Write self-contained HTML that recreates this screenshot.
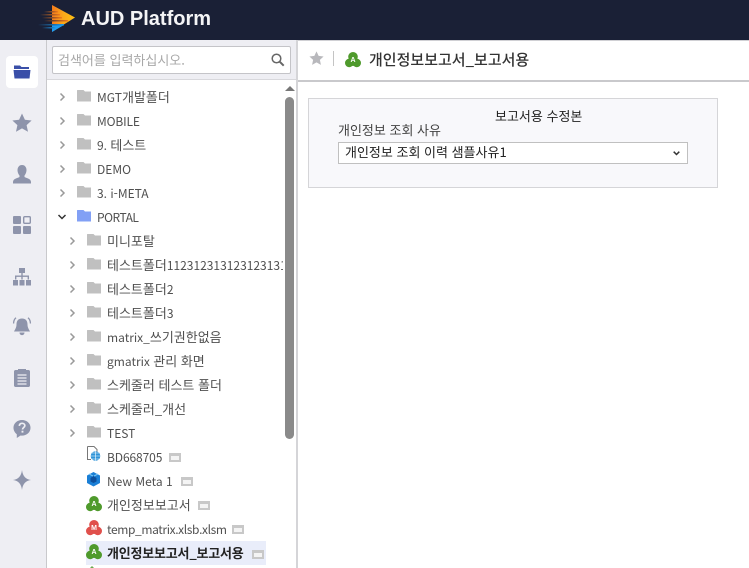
<!DOCTYPE html>
<html lang="ko">
<head>
<meta charset="utf-8">
<title>AUD Platform</title>
<style>
html,body{margin:0;padding:0;width:749px;height:568px;overflow:hidden;background:#fff}
body{position:relative;font-family:"Noto Sans CJK KR","Liberation Sans",sans-serif;font-size:13px;color:#444}
.a{position:absolute}
.t{position:absolute;white-space:nowrap;line-height:16px;color:#505050;font-size:13px}
.t i{font-style:normal;font-size:12px}
svg{position:absolute;display:block;overflow:visible}
</style>
</head>
<body>
<div class="a" style="left:0;top:0;width:749px;height:40px;background:#1a2036"></div>
<svg style="left:38px;top:4px" width="38" height="29" viewBox="0 0 38 29">
<defs>
<linearGradient id="g1" x1="0" y1="0" x2="1" y2="0"><stop offset="0" stop-color="#f47a1c"/><stop offset=".5" stop-color="#fba81a"/><stop offset="1" stop-color="#fdc013"/></linearGradient>
<linearGradient id="g2" x1="0" y1="0" x2="1" y2="0"><stop offset="0" stop-color="#1a2036"/><stop offset="1" stop-color="#f47a1c"/></linearGradient>
<linearGradient id="g3" x1="0" y1="0" x2="1" y2="0"><stop offset="0" stop-color="#1a2036"/><stop offset="1" stop-color="#1f9cf0"/></linearGradient>
</defs>
<path d="M14 1L37 13.500L14 28Z" fill="url(#g1)"/>
<path d="M14 21H26L14 28Z" fill="#1f9cf0"/>
<rect x="6" y="7" width="14" height="1.500" fill="url(#g2)"/>
<rect x="2" y="10" width="20" height="1.500" fill="url(#g2)"/>
<rect x="4" y="13" width="20" height="1.500" fill="url(#g2)"/>
<rect x="6" y="16" width="24" height="1.500" fill="url(#g2)"/>
<rect x="0" y="20" width="26" height="1.500" fill="url(#g3)"/>
<rect x="4" y="23" width="14" height="1.500" fill="url(#g3)"/>
</svg>
<div class="t" style="left:81px;top:6px;font-family:'Liberation Sans',sans-serif;font-size:20px;line-height:26px;font-weight:700;color:#f4f4f6">AUD Platform</div>

<div class="a" style="left:0;top:40px;width:46px;height:528px;background:#eeeef3"></div>
<div class="a" style="left:46px;top:40px;width:1px;height:528px;background:#c9c9cc"></div>
<div class="a" style="left:47px;top:40px;width:250px;height:40px;background:#eeeef3"></div>
<div class="a" style="left:47px;top:79px;width:250px;height:1px;background:#d8d8dc"></div>
<div class="a" style="left:52px;top:46px;width:237px;height:26px;background:#fff;border:1px solid #c4c4c8;border-radius:2px"></div>
<div class="t" style="left:58px;top:51px;font-size:13px;color:#a8a8a8;line-height:17px">검색어를 입력하십시오.</div>
<svg style="left:271px;top:53px" width="14" height="14" viewBox="0 0 14 14"><circle cx="5.500" cy="5.500" r="4.300" fill="none" stroke="#666" stroke-width="1.500"/><path d="M8.700 8.700L12.700 12.700" stroke="#666" stroke-width="2"/></svg>

<div class="a" style="left:6px;top:56px;width:32px;height:32px;background:#fff;border-radius:4px"></div>
<svg style="left:13px;top:64px" width="18" height="16" viewBox="0 0 18 16"><path d="M1 1.500H7L8.500 3H16V5H1Z" fill="#3a4fa8"/><path d="M0.500 6H17.500L16.500 14.500H1.500Z" fill="#3a4fa8"/></svg>
<svg style="left:12px;top:113px" width="20" height="19" viewBox="0 0 20 19"><path d="M10 0.500L12.900 6.700L19.600 7.500L14.600 12.100L16 18.800L10 15.400L4 18.800L5.400 12.100L0.400 7.500L7.100 6.700Z" fill="#8e94ab"/></svg>
<svg style="left:13px;top:165px" width="18" height="19" viewBox="0 0 18 19"><path d="M9 0C12 0 13.500 2.500 13.500 5C13.500 7.500 12.300 9.500 11.500 10.500V12C13 13 18 13.500 18 17V18.500H0V17C0 13.500 5 13 6.500 12V10.500C5.700 9.500 4.500 7.500 4.500 5C4.500 2.500 6 0 9 0Z" fill="#8e94ab"/></svg>
<svg style="left:13px;top:216px" width="18" height="18" viewBox="0 0 18 18"><rect x="0" y="0" width="8" height="8" rx="1" fill="#8e94ab"/><rect x="10.700" y="0.700" width="6.600" height="6.600" rx="1" fill="none" stroke="#8e94ab" stroke-width="1.400"/><rect x="0" y="10" width="8" height="8" rx="1" fill="#8e94ab"/><rect x="10" y="10" width="8" height="8" rx="1" fill="#8e94ab"/></svg>
<svg style="left:13px;top:268px" width="18" height="18" viewBox="0 0 18 18"><g fill="#8e94ab"><rect x="6" y="0" width="6" height="5"/><rect x="8.300" y="5" width="1.400" height="3"/><rect x="2" y="7.500" width="14" height="1.400"/><rect x="2" y="7.500" width="1.400" height="4"/><rect x="14.600" y="7.500" width="1.400" height="4"/><rect x="8.300" y="7.500" width="1.400" height="4"/><rect x="0" y="12" width="5" height="5.500"/><rect x="6.500" y="12" width="5" height="5.500"/><rect x="13" y="12" width="5" height="5.500"/></g></svg>
<svg style="left:13px;top:317px" width="18" height="19" viewBox="0 0 18 19"><path d="M9 1.500C13 1.500 14.500 4 14.500 7.500C14.500 10.500 16 12.500 17 14.500H1C2 12.500 3.500 10.500 3.500 7.500C3.500 4 5 1.500 9 1.500Z" fill="#8e94ab"/><path d="M6.500 15.500H11.500C11.500 19 6.500 19 6.500 15.500Z" fill="#8e94ab"/><path d="M3 0.800C1.200 2.300 .6 4.300 .6 6.500M15 0.800C16.800 2.300 17.400 4.300 17.400 6.500" fill="none" stroke="#8e94ab" stroke-width="1.300"/></svg>
<svg style="left:14px;top:369px" width="16" height="18" viewBox="0 0 16 18"><path d="M1.500 1H4V0H12V1H14.500C15.300 1 16 1.700 16 2.500V16.500C16 17.300 15.300 18 14.500 18H1.500C.7 18 0 17.300 0 16.500V2.500C0 1.700 .7 1 1.500 1Z" fill="#8e94ab"/><path d="M3.500 6H12.500M3.500 9H12.500M3.500 12H12.500M3.500 15H12.500" stroke="#eeeef3" stroke-width="1.200"/></svg>
<svg style="left:13px;top:419px" width="18" height="20" viewBox="0 0 19 20"><path d="M9.500 0.500C14.500 0.500 18.500 4 18.500 8.700C18.500 13.400 14.500 17 9.500 17C9 17 8.500 17 8 16.900L4 19.500V15.500C2 14 .5 11.500 .5 8.700C.5 4 4.500 .5 9.500 .5Z" fill="#8e94ab"/><path d="M6.700 6.800C6.800 5 8 4 9.600 4C11.300 4 12.500 5 12.500 6.500C12.500 8.300 10 8.500 10 10.500" fill="none" stroke="#eeeef3" stroke-width="1.800"/><rect x="9" y="11.800" width="2" height="2" fill="#eeeef3"/></svg>
<svg style="left:13px;top:470px" width="18" height="20" viewBox="0 0 20 20" preserveAspectRatio="none"><path d="M10 0C10.800 6 14 9.200 20 10C14 10.800 10.800 14 10 20C9.200 14 6 10.800 0 10C6 9.200 9.200 6 10 0Z" fill="#8e94ab"/></svg>

<!-- tree rows -->
<svg style="left:0;top:0" width="298" height="568" viewBox="0 0 298 568">
<defs>
<path id="f" d="M0 .6C0 .3 .3 0 .6 0H6.500L8 1.500H14V11.500H0Z"/>
<path id="ch" d="M0 0L3.500 3.500L0 7" fill="none" stroke="#9a9a9a" stroke-width="1.500"/>
</defs>
<g fill="#c0c0c0">
<use href="#f" x="77" y="90"/><use href="#f" x="77" y="114"/><use href="#f" x="77" y="138"/><use href="#f" x="77" y="162"/><use href="#f" x="77" y="186"/>
<use href="#f" x="77" y="210" fill="#82a0f5"/>
<use href="#f" x="87" y="234"/><use href="#f" x="87" y="258"/><use href="#f" x="87" y="282"/><use href="#f" x="87" y="306"/><use href="#f" x="87" y="330"/><use href="#f" x="87" y="354"/><use href="#f" x="87" y="378"/><use href="#f" x="87" y="402"/><use href="#f" x="87" y="426"/>
</g>
<use href="#ch" x="60.500" y="93.500"/><use href="#ch" x="60.500" y="117.500"/><use href="#ch" x="60.500" y="141.500"/><use href="#ch" x="60.500" y="165.500"/><use href="#ch" x="60.500" y="189.500"/>
<path d="M58.500 215L62 218.500L65.500 215" fill="none" stroke="#333" stroke-width="1.500"/>
<use href="#ch" x="70.500" y="237.500"/><use href="#ch" x="70.500" y="261.500"/><use href="#ch" x="70.500" y="285.500"/><use href="#ch" x="70.500" y="309.500"/><use href="#ch" x="70.500" y="333.500"/><use href="#ch" x="70.500" y="357.500"/><use href="#ch" x="70.500" y="381.500"/><use href="#ch" x="70.500" y="405.500"/><use href="#ch" x="70.500" y="429.500"/>
</svg>

<div class="t" style="left:97px;top:89px"><i>MGT</i>개발폴더</div>
<div class="t" style="left:97px;top:113px"><i style="letter-spacing:-.15px">MOBILE</i></div>
<div class="t" style="left:97px;top:137px"><i>9. </i>테스트</div>
<div class="t" style="left:97px;top:161px"><i>DEMO</i></div>
<div class="t" style="left:97px;top:185px"><i>3. i-META</i></div>
<div class="t" style="left:97px;top:209px"><i style="letter-spacing:-.5px">PORTAL</i></div>
<div class="t" style="left:107px;top:233px">미니포탈</div>
<div class="t" style="left:107px;top:257px;width:176px;overflow:hidden">테스트폴더<i>11231231312312313123</i></div>
<div class="t" style="left:107px;top:281px">테스트폴더<i>2</i></div>
<div class="t" style="left:107px;top:305px">테스트폴더<i>3</i></div>
<div class="t" style="left:107px;top:329px"><i>matrix_</i>쓰기권한없음</div>
<div class="t" style="left:107px;top:353px"><i>gmatrix </i>관리 화면</div>
<div class="t" style="left:107px;top:377px">스케줄러 테스트 폴더</div>
<div class="t" style="left:107px;top:401px">스케줄러_개선</div>
<div class="t" style="left:107px;top:425px"><i>TEST</i></div>
<div class="t" style="left:107px;top:449px"><i style="letter-spacing:-.1px">BD668705</i></div>
<div class="t" style="left:107px;top:473px"><i>New Meta 1</i></div>
<div class="t" style="left:107px;top:497px">개인정보보고서</div>
<div class="t" style="left:107px;top:521px"><i style="letter-spacing:-.38px">temp_matrix.xlsb.xlsm</i></div>
<div class="a" style="left:86px;top:541px;width:180px;height:24px;background:#e9edfa"></div>
<div class="t" style="left:107px;top:545px;font-weight:700;color:#222;letter-spacing:-.2px">개인정보보고서_보고서용</div>

<svg style="left:0;top:0" width="298" height="568" viewBox="0 0 298 568">
<defs>
<g id="clo"><circle cx="8" cy="4.800" r="4.800"/><circle cx="4.200" cy="11" r="4.200"/><circle cx="11.800" cy="11" r="4.200"/><circle cx="8" cy="9" r="5"/></g>
<g id="win"><rect x="0" y="0" width="12" height="9" fill="#c8c8c8"/><rect x="2" y="3" width="8" height="4" fill="#f4f4f4"/></g>
</defs>
<path d="M87.500 446.500H94L97 449.500V452M87.500 446.500V459.500H91" fill="none" stroke="#777" stroke-width="1"/>
<circle cx="95.500" cy="456" r="4.800" fill="#2f94d8"/><path d="M90.700 456H100.300M95.500 451.200V460.800M92 453H99M92 459H99" stroke="#fff" stroke-width=".6" fill="none"/>
<path d="M93.500 472L100 475.500V483L93.500 486.500L87 483V475.500Z" fill="#1a7fd6"/><path d="M93.500 476L96.500 478V481.500L93.500 483L90.500 481.500V478Z" fill="#0d4f9c"/><path d="M89 474L93 476M98 474L94 476" stroke="#7cc6f2" stroke-width="1"/>
<use href="#clo" x="86" y="496" fill="#4f9a2c"/><use href="#clo" x="86" y="520" fill="#e0504c"/><use href="#clo" x="86" y="544" fill="#4f9a2c"/>
<use href="#win" x="169" y="453"/><use href="#win" x="181" y="477"/><use href="#win" x="198" y="501"/><use href="#win" x="232" y="525"/><use href="#win" x="252" y="550" />
<g transform="translate(345 52)"><use href="#clo" fill="#4f9a2c"/></g>
<path d="M92 566L94 568H90Z" fill="#6aa84f"/>
</svg>
<div class="t" style="left:90px;top:499px;width:8px;text-align:center;font-family:'Liberation Sans',sans-serif;font-size:7px;font-weight:700;line-height:12px;color:#fff">A</div>
<div class="t" style="left:90px;top:523px;width:8px;text-align:center;font-family:'Liberation Sans',sans-serif;font-size:7px;font-weight:700;line-height:12px;color:#fff">M</div>
<div class="t" style="left:90px;top:547px;width:8px;text-align:center;font-family:'Liberation Sans',sans-serif;font-size:7px;font-weight:700;line-height:12px;color:#fff">A</div>

<!-- scrollbar -->
<svg style="left:285px;top:86px" width="10" height="5" viewBox="0 0 10 5"><path d="M5 0L10 5H0Z" fill="#777"/></svg>
<div class="a" style="left:285px;top:97px;width:9px;height:342px;background:#8a8a8a;border-radius:4.500px"></div>
<div class="a" style="left:296px;top:40px;width:2px;height:528px;background:#d5d5d8"></div>

<!-- main -->
<div class="a" style="left:298px;top:40px;width:451px;height:1px;background:#d0d0d4"></div>
<div class="a" style="left:298px;top:80px;width:451px;height:2px;background:#c9c9cc"></div>
<svg style="left:309px;top:51px" width="15" height="14" viewBox="0 0 20 19"><path d="M10 0.500L12.900 6.700L19.600 7.500L14.600 12.100L16 18.800L10 15.400L4 18.800L5.400 12.100L0.400 7.500L7.100 6.700Z" fill="#b8b8bc"/></svg>
<div class="a" style="left:333px;top:51px;width:1px;height:15px;background:#c4c4c4"></div>
<div class="t" style="left:349px;top:55px;width:8px;text-align:center;font-family:'Liberation Sans',sans-serif;font-size:7px;font-weight:700;line-height:12px;color:#fff">A</div>
<div class="t" style="left:369px;top:50px;font-size:15px;line-height:20px;font-weight:500;color:#333">개인정보보고서_보고서용</div>

<div class="a" style="left:308px;top:98px;width:408px;height:88px;background:#f8f8fb;border:1px solid #d5d5d8"></div>
<div class="t" style="left:495px;top:108px;color:#222">보고서용 수정본</div>
<div class="t" style="left:338px;top:122px;color:#444">개인정보 조회 사유</div>
<div class="a" style="left:338px;top:142px;width:348px;height:20px;background:#fff;border:1px solid #c0c0c0"></div>
<div class="t" style="left:345px;top:144px;color:#222">개인정보 조회 이력 샘플사유1</div>
<svg style="left:673px;top:151px" width="7" height="5" viewBox="0 0 7 5"><path d="M.7 .7L3.500 3.500L6.300 .7" fill="none" stroke="#333" stroke-width="1.500"/></svg>
</body>
</html>
